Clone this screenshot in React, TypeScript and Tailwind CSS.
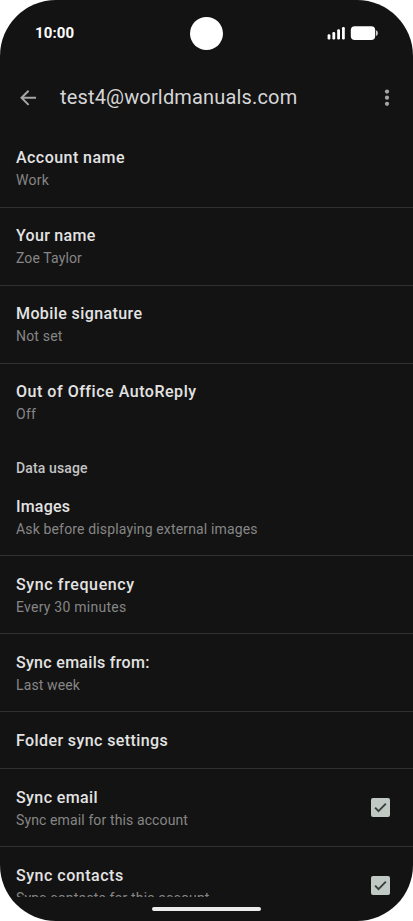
import React, { useState } from "react";

interface Setting {
  id: string;
  title: string;
  value?: string;
  titleClass: string;
  valueClass?: string;
  checkable?: boolean;
}

const accountSettings: Setting[] = [
  { id: "account", title: "Account name", value: "Work", titleClass: "tracking-[0.45px]", valueClass: "tracking-[0.25px]" },
  { id: "name", title: "Your name", value: "Zoe Taylor", titleClass: "tracking-[0.3px]", valueClass: "tracking-[0.12px]" },
  { id: "signature", title: "Mobile signature", value: "Not set", titleClass: "tracking-[0.4px]", valueClass: "tracking-[0.2px]" },
  { id: "autoreply", title: "Out of Office AutoReply", value: "Off", titleClass: "tracking-[0.53px]", valueClass: "tracking-[0.3px]" },
];

const dataSettings: Setting[] = [
  { id: "images", title: "Images", value: "Ask before displaying external images", titleClass: "tracking-[0.2px]", valueClass: "tracking-[0.15px]" },
  { id: "frequency", title: "Sync frequency", value: "Every 30 minutes", titleClass: "tracking-[0.62px]", valueClass: "tracking-[0.25px]" },
  { id: "from", title: "Sync emails from:", value: "Last week", titleClass: "tracking-[0.3px]", valueClass: "tracking-[0.12px]" },
  { id: "folders", title: "Folder sync settings", titleClass: "tracking-[0.4px]" },
  { id: "email", title: "Sync email", value: "Sync email for this account", titleClass: "tracking-[0.4px]", valueClass: "tracking-[0.12px]", checkable: true },
  { id: "contacts", title: "Sync contacts", value: "Sync contacts for this account", titleClass: "tracking-[0.52px]", valueClass: "tracking-[0.15px]", checkable: true },
];

function StatusBar() {
  return (
    <div className="flex h-[66px] shrink-0 items-center justify-between px-[35px]">
      <span className="w-[60px] text-[15px] font-bold leading-5 tracking-[0.1px] text-white">10:00</span>
      <div className="h-[33px] w-[33px] rounded-full bg-white" />
      <svg width="60" height="16" viewBox="0 0 60 16" fill="#fff">
        {/* Signal */}
        <rect x="9.6" y="9.3" width="2.8" height="5.2" rx="1.2" />
        <rect x="14.4" y="7" width="2.8" height="7.5" rx="1.2" />
        <rect x="19.2" y="4.2" width="2.8" height="10.3" rx="1.2" />
        <rect x="24" y="2" width="2.8" height="12.5" rx="1.2" />
        {/* Battery */}
        <rect x="32.8" y="1.2" width="24.4" height="13.8" rx="4" />
        <path d="M58 5.2q1.9.6 1.9 2.9T58 11z" fill="#d0d0d0" />
      </svg>
    </div>
  );
}

function Checkbox({ checked, onToggle, label }: { checked: boolean; onToggle: () => void; label: string }) {
  return (
    <button
      type="button"
      role="checkbox"
      aria-checked={checked}
      aria-label={label}
      onClick={onToggle}
      className="mt-[29px] h-[19px] w-[19px] shrink-0 rounded-[2px] bg-[#c1c9c5]"
    >
      {checked && (
        <svg width="19" height="19" viewBox="0 0 19 19" fill="none" stroke="#3b4341" strokeWidth="2">
          <path d="M4.1 9.6l3.4 3.5 7.4-7.5" />
        </svg>
      )}
    </button>
  );
}

export default function App() {
  const [checked, setChecked] = useState<Record<string, boolean>>({ email: true, contacts: true });

  const toggle = (id: string) => {
    setChecked((prev) => ({ ...prev, [id]: !prev[id] }));
  };

  const renderRow = (item: Setting, divider: boolean, padding: string) => (
    <div
      key={item.id}
      className={`flex shrink-0 justify-between border-b pl-4 pr-[23px] ${item.value ? "h-[78px]" : "h-[57px]"} ${
        divider ? "border-[#303030]" : "border-transparent"
      }`}
    >
      <div className={`whitespace-nowrap ${padding}`}>
        <p className={`text-base font-medium leading-6 text-[#e3e3e3] ${item.titleClass}`}>{item.title}</p>
        {item.value && <p className={`text-sm leading-5 text-[#868686] ${item.valueClass}`}>{item.value}</p>}
      </div>
      {item.checkable && (
        <Checkbox checked={!!checked[item.id]} onToggle={() => toggle(item.id)} label={item.title} />
      )}
    </div>
  );

  return (
    <div className="h-[921px] w-[413px] bg-white font-[Roboto,sans-serif]">
      <div className="flex h-full flex-col overflow-hidden rounded-[56px] bg-[#131313]">
        <StatusBar />

        {/* App bar */}
        <header className="flex h-16 shrink-0 items-center pl-[18px] pr-4">
          <svg width="20" height="20" viewBox="0 0 20 20" fill="none" stroke="#a6a6a6" strokeWidth="2">
            <path d="M18 9.8H3.6M10.6 2.7L3.5 9.8l7.1 7.1" />
          </svg>
          <h1 className="ml-[22px] flex-1 whitespace-nowrap pb-0.5 text-xl leading-7 text-[#d6d6d6] tracking-[0.16px]">test4@worldmanuals.com</h1>
          <svg width="20" height="20" viewBox="0 0 20 20" fill="#a6a6a6">
            <circle cx="10" cy="3.6" r="2.1" />
            <circle cx="10" cy="9.7" r="2.1" />
            <circle cx="10" cy="15.8" r="2.1" />
          </svg>
        </header>

        {/* Settings list, cut off above the gesture bar */}
        <main className="flex h-[767px] shrink-0 flex-col overflow-hidden">
          {accountSettings.map((item, i) => renderRow(item, i < accountSettings.length - 1, "pt-4"))}
          <h2 className="h-9 shrink-0 px-4 pt-4 text-sm font-medium leading-5 text-[#c4c4c4] tracking-[0.14px]">Data usage</h2>
          {dataSettings.map((item) => renderRow(item, true, "pt-[17px]"))}
        </main>

        <div className="flex flex-1 justify-center pt-2.5">
          <div className="h-1 w-[109px] rounded-full bg-[#ececec]" />
        </div>
      </div>
    </div>
  );
}
